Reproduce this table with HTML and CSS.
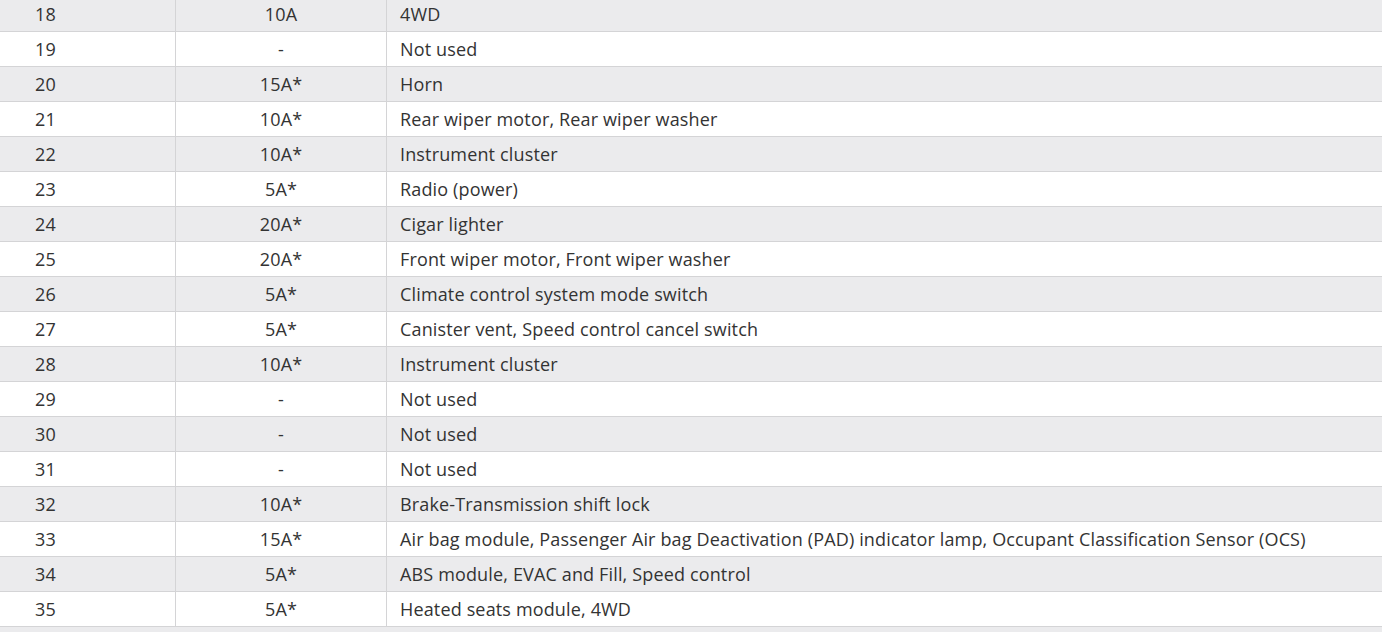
FILE: index.html
```html
<!DOCTYPE html>
<html>
<head>
<meta charset="utf-8">
<link rel="stylesheet" href="styles.css">
</head>
<body>
<div class="wrap">
<table class="fuse-table">
<tbody>
<tr class="alt"><td class="num">18</td><td class="amp">10A</td><td class="desc">4WD</td></tr>
<tr><td class="num">19</td><td class="amp">-</td><td class="desc">Not used</td></tr>
<tr class="alt"><td class="num">20</td><td class="amp">15A*</td><td class="desc">Horn</td></tr>
<tr><td class="num">21</td><td class="amp">10A*</td><td class="desc">Rear wiper motor, Rear wiper washer</td></tr>
<tr class="alt"><td class="num">22</td><td class="amp">10A*</td><td class="desc">Instrument cluster</td></tr>
<tr><td class="num">23</td><td class="amp">5A*</td><td class="desc">Radio (power)</td></tr>
<tr class="alt"><td class="num">24</td><td class="amp">20A*</td><td class="desc">Cigar lighter</td></tr>
<tr><td class="num">25</td><td class="amp">20A*</td><td class="desc">Front wiper motor, Front wiper washer</td></tr>
<tr class="alt"><td class="num">26</td><td class="amp">5A*</td><td class="desc">Climate control system mode switch</td></tr>
<tr><td class="num">27</td><td class="amp">5A*</td><td class="desc">Canister vent, Speed control cancel switch</td></tr>
<tr class="alt"><td class="num">28</td><td class="amp">10A*</td><td class="desc">Instrument cluster</td></tr>
<tr><td class="num">29</td><td class="amp">-</td><td class="desc">Not used</td></tr>
<tr class="alt"><td class="num">30</td><td class="amp">-</td><td class="desc">Not used</td></tr>
<tr><td class="num">31</td><td class="amp">-</td><td class="desc">Not used</td></tr>
<tr class="alt"><td class="num">32</td><td class="amp">10A*</td><td class="desc">Brake-Transmission shift lock</td></tr>
<tr><td class="num">33</td><td class="amp">15A*</td><td class="desc">Air bag module, Passenger Air bag Deactivation (PAD) indicator lamp, Occupant Classification Sensor (OCS)</td></tr>
<tr class="alt"><td class="num">34</td><td class="amp">5A*</td><td class="desc">ABS module, EVAC and Fill, Speed control</td></tr>
<tr><td class="num">35</td><td class="amp">5A*</td><td class="desc">Heated seats module, 4WD</td></tr>
</tbody>
</table>
<div class="next-row"></div>
</div>
</body>
</html>
```

FILE: styles.css
```css
html, body {
  margin: 0;
  padding: 0;
  background: #ffffff;
  overflow: hidden;
}
.wrap {
  margin-top: -4px;
}
.fuse-table {
  width: 100%;
  border-collapse: collapse;
  font-family: "Open Sans", "Noto Sans", sans-serif;
  font-size: 18px;
  letter-spacing: 0.15px;
  color: #333333;
}
.fuse-table td {
  height: 34px;
  padding: 0;
  border-top: 1px solid #d4d4d6;
  border-bottom: 1px solid #d4d4d6;
  border-left: 1px solid #d4d4d6;
  vertical-align: middle;
  line-height: 20px;
}
.fuse-table tr td:first-child {
  border-left: none;
}
.fuse-table tr.alt td {
  background: #ebebed;
}
.num {
  width: 140px;
  padding-left: 35px !important;
  text-align: left;
}
.amp {
  width: 210px;
  text-align: center;
}
.desc {
  padding-left: 13px !important;
  text-align: left;
}
.next-row {
  height: 6px;
  background: #ebebed;
}
```
